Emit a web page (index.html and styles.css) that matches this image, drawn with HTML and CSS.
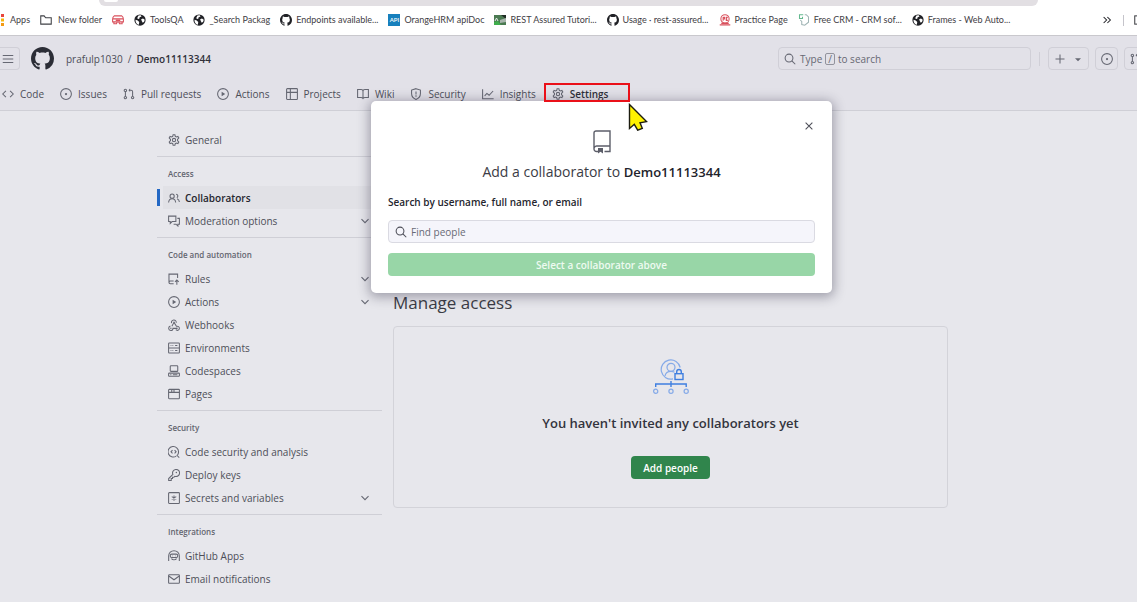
FILE: index.html
```html
<!DOCTYPE html>
<html lang="en">
<head>
<meta charset="utf-8">
<title>Collaborators · Demo11113344</title>
<link rel="stylesheet" href="styles.css">
</head>
<body>
<svg class="sprite" aria-hidden="true">
  <symbol id="mark" viewBox="0 0 16 16"><path class="solid" d="M8 0C3.58 0 0 3.58 0 8c0 3.54 2.29 6.53 5.47 7.59.4.07.55-.17.55-.38 0-.19-.01-.82-.01-1.49-2.01.37-2.53-.49-2.69-.94-.09-.23-.48-.94-.82-1.13-.28-.15-.68-.52-.01-.53.63-.01 1.08.58 1.23.82.72 1.21 1.87.87 2.33.66.07-.52.28-.87.51-1.07-1.78-.2-3.64-.89-3.64-3.95 0-.87.31-1.59.82-2.15-.08-.2-.36-1.02.08-2.12 0 0 .67-.21 2.2.82.64-.18 1.32-.27 2-.27s1.36.09 2 .27c1.53-1.04 2.2-.82 2.2-.82.44 1.1.16 1.92.08 2.12.51.56.82 1.27.82 2.15 0 3.07-1.87 3.75-3.65 3.95.29.25.54.73.54 1.48 0 1.07-.01 1.93-.01 2.2 0 .21.15.46.55.38A8.01 8.01 0 0016 8c0-4.42-3.58-8-8-8z"/></symbol>
  <symbol id="globe" viewBox="0 0 16 16"><circle class="solid" cx="8" cy="8" r="7.5"/><path fill="#fff" stroke="none" d="M2 7.5l3 1 2 2-.5 3.8C3.500 13.500 1.800 11 2 7.500zM6 2l3-.4 1 1.600-2.500 1-.5 2-2 .3L4.500 5zM9.500 7l2.500-1 2.300 1.500-.8 2.800-1.800 1.500-1.200-2.300z"/></symbol>
  <symbol id="code" viewBox="0 0 16 16"><path d="M5.200 3.700L1 8l4.200 4.300M10.800 3.700L15 8l-4.200 4.300"/></symbol>
  <symbol id="issue" viewBox="0 0 16 16"><circle cx="8" cy="8" r="7.200"/><circle class="solid" cx="8" cy="8" r="1.500"/></symbol>
  <symbol id="pull" viewBox="0 0 16 16"><circle cx="3.200" cy="3.200" r="1.600"/><circle cx="3.200" cy="12.800" r="1.600"/><circle cx="12.800" cy="12.800" r="1.600"/><path d="M3.200 5v6M12.800 11V5a2 2 0 0 0-2-2H8"/><path d="M9.500 .8L7.300 3l2.200 2.200z" class="solid"/></symbol>
  <symbol id="play" viewBox="0 0 16 16"><circle cx="8" cy="8" r="7.200"/><path class="solid" d="M6.200 5v6L11 8z"/></symbol>
  <symbol id="table" viewBox="0 0 16 16"><rect x=".8" y=".8" width="14.400" height="14.400" rx="1"/><path d="M1 5.800h14M5.800 1v14"/></symbol>
  <symbol id="book" viewBox="0 0 16 16"><path d="M.8 2h4.700A2.500 2.500 0 0 1 8 4.500 2.500 2.500 0 0 1 10.500 2h4.700v10.700h-4.500c-1.500 0-2.200.5-2.700 1.300-.5-.8-1.200-1.300-2.700-1.300H.8zM8 4.500V14"/></symbol>
  <symbol id="shield" viewBox="0 0 16 16"><path d="M8 .9l5.900 1.900v4.400c0 3.600-2 6.400-5.900 8-3.900-1.600-5.900-4.400-5.900-8V2.800zM8 4.500v4"/><circle class="solid" cx="8" cy="10.800" r="1"/></symbol>
  <symbol id="graph" viewBox="0 0 16 16"><path d="M.8 1.500v12.700h14.700M3.500 10.500l3-3.300 3 2.500 5.300-5.700"/></symbol>
  <symbol id="gear" viewBox="0 0 16 16"><path d="M6.800 .9h2.400l.5 2.200 1.300.75 2.200-.6 1.200 2.050-1.700 1.900v1.600l1.700 1.900-1.200 2.050-2.200-.6-1.300.75-.5 2.200H6.800l-.5-2.200-1.300-.75-2.200.6-1.200-2.050 1.700-1.900V7.200L1.600 5.300l1.200-2.050 2.200.6 1.300-.75z"/><circle cx="8" cy="8" r="2.200"/></symbol>
  <symbol id="people" viewBox="0 0 16 16"><circle cx="5.500" cy="5.500" r="2.800"/><path d="M.8 14c.3-3.500 2-5 4.700-5s4.400 1.500 4.700 5M10.800 3a2.500 2.500 0 0 1 1 4.700M12.200 9c1.800.8 2.800 2.200 3 4.300"/></symbol>
  <symbol id="comments" viewBox="0 0 16 16"><path d="M.8 1.500h9.700v7.200H5.500l-2.500 2.500V8.700H.8zM12.500 4.500h2.700v7.700h-2v2.500l-2.500-2.500H7.500"/></symbol>
  <symbol id="rules" viewBox="0 0 16 16"><path d="M7.500 14.200H3a1.700 1.700 0 0 1-1.700-1.700V1.500h11.500v5M1.500 12.500C1.500 11 2.500 10.700 3 10.700h4.500M11.800 15.500V9.500M9.300 11.800l2.500-2.500 2.500 2.500"/></symbol>
  <symbol id="hook" viewBox="0 0 16 16"><path d="M4.800 5.500A3.200 3.200 0 1 1 11 5M8 4.500L5.200 9.700M8 4.500l3.200 5.200c2.200-.5 4 1 4 2.700 0 2.800-3.200 3.500-4.800 1.900M3.200 9.300c-3.200 1.200-3 5.700.4 5.900 2 0 3-1.400 3-2.700H12"/><circle class="solid" cx="8" cy="4.300" r="1"/><circle class="solid" cx="3.800" cy="12.200" r="1"/><circle class="solid" cx="12" cy="12.400" r="1"/></symbol>
  <symbol id="server" viewBox="0 0 16 16"><rect x=".8" y="1.300" width="14.400" height="13.400" rx="1"/><path d="M1 8h14M3.500 4.700h1M6 4.700h1M9.500 4.700h3M3.500 11.300h1M6 11.300h1M9.500 11.300h3"/></symbol>
  <symbol id="laptop" viewBox="0 0 16 16"><rect x="3" y=".9" width="10" height="7.600" rx="1"/><rect x=".8" y="10.800" width="14.400" height="4.300" rx="1"/><path d="M3 13h1.500M6.500 13h6"/></symbol>
  <symbol id="browser" viewBox="0 0 16 16"><rect x=".8" y="1.800" width="14.400" height="12.400" rx="1"/><path d="M1 5.800h14M5 2v3.500M8 2v3.500"/></symbol>
  <symbol id="scan" viewBox="0 0 16 16"><path d="M11 13.500A7 7 0 1 1 14 8.500a6.500 6.500 0 0 1-1.300 3.500M11.500 12l3.500 3.500M6 5.500L4 7.700l2 2.200M8.800 5.500l2 2.200-2 2.200"/></symbol>
  <symbol id="key" viewBox="0 0 16 16"><path d="M6.500 7.300A4.700 4.700 0 1 1 9 9.700L7.800 11H6v1.700H4.300v2.500H.9v-2.500z"/><circle class="solid" cx="11.200" cy="4.800" r="1"/></symbol>
  <symbol id="asterisk" viewBox="0 0 16 16"><rect x=".8" y=".8" width="14.400" height="14.400" rx="1"/><path d="M8 4.500v7M5 6.200l6 3.600M11 6.200L5 9.800"/></symbol>
  <symbol id="bot" viewBox="0 0 16 16"><path d="M.9 14.500V8a7.100 7.100 0 0 1 14.200 0v6.500M4.500 11.500c2 2 5 2 7 0"/><rect x="3" y="5.500" width="10" height="4.500" rx="2"/><path d="M6 7.800h.5M9.500 7.800h.5"/></symbol>
  <symbol id="mail" viewBox="0 0 16 16"><rect x=".8" y="2.300" width="14.400" height="11.400" rx="1"/><path d="M1 4l7 5 7-5"/></symbol>
  <symbol id="chevron" viewBox="0 0 16 16"><path d="M3.300 5.500L8 10.200l4.700-4.700"/></symbol>
  <symbol id="search" viewBox="0 0 16 16"><circle cx="6.700" cy="6.700" r="5.200"/><path d="M10.500 10.500l4.500 4.500"/></symbol>
  <symbol id="plus" viewBox="0 0 16 16"><path d="M8 2v12M2 8h12"/></symbol>
  <symbol id="caret" viewBox="0 0 16 16"><path class="solid" d="M4 7h8L8 11z"/></symbol>
  <symbol id="close" viewBox="0 0 16 16"><path d="M3.500 3.500l9 9M12.500 3.500l-9 9"/></symbol>
  <symbol id="menu" viewBox="0 0 16 16"><path d="M1 3.300h14M1 8h14M1 12.700h14"/></symbol>
  <symbol id="folder" viewBox="0 0 16 16"><path d="M1 13.500v-11h4.500L7.500 5H15v8.500z"/></symbol>
</svg>

<header class="bookmarks">
  <div class="omnibox"><span class="omnibox-knob"></span></div>
  <nav class="bookmark-row" aria-label="Bookmarks">
    <a href="#" class="bookmark apps"><svg class="apps-dots" viewBox="0 0 4 12" aria-hidden="true"><path fill="#e8453c" d="M1 0h3v3H1z"/><path fill="#f6b60b" d="M1 4.500h3v3H1z"/><path fill="#f39b14" d="M1 9h3v3H1z"/></svg>Apps</a>
    <a href="#" class="bookmark folder"><svg class="icon"><use href="#folder"/></svg>New folder</a>
    <a href="#" class="bookmark" aria-label="Postman"><svg class="icon rose" viewBox="0 0 16 16"><path d="M3 2.500h10q2.200 1.500 2.200 4.500v3.500H.8V7Q.8 4 3 2.500zM1 6.500h14M2.500 10.500V13H6l1-2.500M9 10.500l1 2.500h3.500v-2.500M5 8.500h6"/></svg></a>
    <a href="#" class="bookmark"><svg class="icon dark"><use href="#globe"/></svg>ToolsQA</a>
    <a href="#" class="bookmark"><svg class="icon dark"><use href="#globe"/></svg>_Search Packag</a>
    <a href="#" class="bookmark"><svg class="icon dark"><use href="#mark"/></svg>Endpoints available...</a>
    <a href="#" class="bookmark"><span class="api">API</span>OrangeHRM apiDoc</a>
    <a href="#" class="bookmark"><svg class="icon" viewBox="0 0 12 12"><path fill="#4b7a52" stroke="none" d="M0 1h12v10H0z"/><path fill="#202c24" stroke="none" d="M0 1h7l5 4V1z"/><path fill="#a9b5ad" stroke="none" d="M6 6l6-2v4l-6 1z"/><path fill="#3fae4c" stroke="none" d="M0 8l4-1 3 4H0z"/><path stroke="#e6efe8" stroke-width="1" d="M1 7l1.500-3L4 7"/></svg>REST Assured Tutori...</a>
    <a href="#" class="bookmark"><svg class="icon dark"><use href="#mark"/></svg>Usage · rest-assured...</a>
    <a href="#" class="bookmark"><svg class="icon rose" viewBox="0 0 16 16"><circle cx="8" cy="6.500" r="5.500"/><path d="M5.500 4v5M5.500 4.500h2v2h-2M9 4.500h2l-1.500 2 1.500 2H9M1 14.500h14M3 12.500h10"/></svg>Practice Page</a>
    <a href="#" class="bookmark"><svg class="icon mint" viewBox="0 0 16 16"><path d="M7 1H2v5h4V3.500"/><path stroke="#9fb4b4" d="M3 8l2 2v4l4 1 5-4V4l-3-3H9"/></svg>Free CRM - CRM sof...</a>
    <a href="#" class="bookmark"><svg class="icon dark"><use href="#globe"/></svg>Frames - Web Auto...</a>
    <span class="overflow-tools">
      <button class="more" aria-label="More bookmarks"><svg class="icon" viewBox="0 0 16 16"><path d="M3.500 4L7.500 8l-4 4M8.500 4l4 4-4 4"/></svg></button>
      <span class="rule"></span>
      <svg class="icon" viewBox="0 0 16 16"><rect x="1" y="2.500" width="14" height="11"/></svg>
    </span>
  </nav>
</header>

<header class="site-header">
  <div class="top-row">
    <button class="menu-button" aria-label="Open menu"><svg class="icon"><use href="#menu"/></svg></button>
    <a href="#" class="logo" aria-label="Homepage"><svg><use href="#mark"/></svg></a>
    <nav class="crumbs" aria-label="Breadcrumb"><a href="#">prafulp1030</a><span>/</span><a href="#" class="current">Demo11113344</a></nav>
    <div class="tools">
      <button class="search-button"><svg class="icon"><use href="#search"/></svg><span>Type</span><kbd>/</kbd><span>to search</span></button>
      <span class="divider"></span>
      <button class="tool wide" aria-label="Create new"><svg class="icon"><use href="#plus"/></svg><svg class="icon"><use href="#caret"/></svg></button>
      <button class="tool" aria-label="Issues"><svg class="icon"><use href="#issue"/></svg></button>
      <button class="tool" aria-label="Pull requests"><svg class="icon"><use href="#pull"/></svg></button>
    </div>
  </div>
  <nav class="tabs" aria-label="Repository">
    <a href="#"><svg class="icon"><use href="#code"/></svg>Code</a>
    <a href="#"><svg class="icon"><use href="#issue"/></svg>Issues</a>
    <a href="#"><svg class="icon"><use href="#pull"/></svg>Pull requests</a>
    <a href="#"><svg class="icon"><use href="#play"/></svg>Actions</a>
    <a href="#"><svg class="icon"><use href="#table"/></svg>Projects</a>
    <a href="#"><svg class="icon"><use href="#book"/></svg>Wiki</a>
    <a href="#"><svg class="icon"><use href="#shield"/></svg>Security</a>
    <a href="#"><svg class="icon"><use href="#graph"/></svg>Insights</a>
    <a href="#" class="selected"><svg class="icon"><use href="#gear"/></svg>Settings</a>
  </nav>
</header>

<div class="page">
  <nav class="sidebar" aria-label="Settings">
    <a href="#" class="item"><svg class="icon"><use href="#gear"/></svg>General</a>
    <section>
      <h2>Access</h2>
      <a href="#" class="item active"><svg class="icon"><use href="#people"/></svg>Collaborators</a>
      <a href="#" class="item"><svg class="icon"><use href="#comments"/></svg>Moderation options<svg class="icon chevron"><use href="#chevron"/></svg></a>
    </section>
    <section>
      <h2>Code and automation</h2>
      <a href="#" class="item"><svg class="icon"><use href="#rules"/></svg>Rules<svg class="icon chevron"><use href="#chevron"/></svg></a>
      <a href="#" class="item"><svg class="icon"><use href="#play"/></svg>Actions<svg class="icon chevron"><use href="#chevron"/></svg></a>
      <a href="#" class="item"><svg class="icon"><use href="#hook"/></svg>Webhooks</a>
      <a href="#" class="item"><svg class="icon"><use href="#server"/></svg>Environments</a>
      <a href="#" class="item"><svg class="icon"><use href="#laptop"/></svg>Codespaces</a>
      <a href="#" class="item"><svg class="icon"><use href="#browser"/></svg>Pages</a>
    </section>
    <section>
      <h2>Security</h2>
      <a href="#" class="item"><svg class="icon"><use href="#scan"/></svg>Code security and analysis</a>
      <a href="#" class="item"><svg class="icon"><use href="#key"/></svg>Deploy keys</a>
      <a href="#" class="item"><svg class="icon"><use href="#asterisk"/></svg>Secrets and variables<svg class="icon chevron"><use href="#chevron"/></svg></a>
    </section>
    <section>
      <h2>Integrations</h2>
      <a href="#" class="item"><svg class="icon"><use href="#bot"/></svg>GitHub Apps</a>
      <a href="#" class="item"><svg class="icon"><use href="#mail"/></svg>Email notifications</a>
    </section>
  </nav>

  <main class="content">
    <h1>Manage access</h1>
    <div class="empty-state">
      <svg class="access-art" viewBox="0 0 36 36" aria-hidden="true">
        <g stroke="#85aae8" stroke-width="1.200"><path d="M20 19.900A9.600 9.600 0 1 1 27.200 8.500"/><circle cx="18" cy="8.300" r="4"/><path d="M12 17c.5-3 2.500-4.700 6-4.700 1.500 0 2.500.3 3.500 1"/><circle cx="2.700" cy="32.300" r="2.100"/><circle cx="18" cy="32.300" r="2.100"/><circle cx="33.200" cy="32.300" r="2.100"/></g>
        <g stroke="#3f7fe0" stroke-width="1.400"><rect x="22" y="14.700" width="8" height="5.800"/><path d="M23.700 14.500v-1.700a2.300 2.300 0 0 1 4.600 0v1.700M2.700 28v-3h30.500v3M18 22v6"/></g>
      </svg>
      <h2>You haven't invited any collaborators yet</h2>
      <button class="primary">Add people</button>
    </div>
  </main>
</div>

<div class="dialog" role="dialog" aria-labelledby="dialog-title">
  <button class="close" aria-label="Close"><svg class="icon"><use href="#close"/></svg></button>
  <svg class="repo" viewBox="0 0 18 24" aria-hidden="true"><path d="M5 21.500H3.500a2.500 2.500 0 0 1-2.500-2.500V3a2 2 0 0 1 2-2h14v20.500h-5.500M1.200 18c.4-1.500 1.300-2 2.300-2H17"/><path class="solid" d="M5 18h5v5.500l-2.500-1.800L5 23.500z"/></svg>
  <h2 id="dialog-title">Add a collaborator to <strong>Demo11113344</strong></h2>
  <label for="people-search">Search by username, full name, or email</label>
  <div class="field"><svg class="icon"><use href="#search"/></svg><input id="people-search" type="text" placeholder="Find people"></div>
  <button class="primary submit" disabled>Select a collaborator above</button>
</div>

<div class="highlight"></div>
<svg class="pointer" viewBox="0 0 20 28" aria-hidden="true"><path d="M1.500 1.500v24l4.800-4.200 3.400 5.900 4.600-1.900-2.300-5.600 6.500-1.100z"/></svg>
</body>
</html>
```

FILE: styles.css
```css
* { box-sizing: border-box; }

body {
  margin: 0;
  min-height: 100vh;
  position: relative;
  overflow: hidden;
  background: #e7e7ec;
  color: #4d4e58;
  font: 10px/16px "Open Sans", "Noto Sans", sans-serif;
}

a { color: inherit; text-decoration: none; }
button, input { font: inherit; color: inherit; }
button { padding: 0; border: 0; background: none; }
h1, h2 { margin: 0; }

.sprite { position: absolute; width: 0; height: 0; }
.icon {
  flex: none;
  width: 12px;
  height: 12px;
}
svg {
  fill: none;
  stroke: currentColor;
  stroke-width: 1.4;
}
.solid { fill: currentColor; stroke: none; }

/* Browser bookmarks */
.bookmarks {
  height: 36px;
  border-bottom: 1px solid #c9c8cd;
  background: #fff;
  color: #3f4045;
}
.omnibox {
  height: 6px;
  margin: 0 99px;
  overflow: hidden;
  border-radius: 0 0 12px 12px;
  background: #e2dfe3;
}
.omnibox-knob {
  display: block;
  width: 14px;
  height: 2px;
  margin-left: 5px;
  border-radius: 0 0 8px 8px;
  background: #fff;
}
.bookmark-row {
  display: flex;
  align-items: center;
  gap: 10px;
  height: 28px;
  font-family: Lato, "Open Sans", sans-serif;
  font-size: 9px;
  white-space: nowrap;
}
.bookmark { display: flex; align-items: center; gap: 4px; }
.apps-dots { width: 4px; height: 12px; stroke: none; }
.apps, .folder { gap: 6px; }
.dark { color: #202126; }
.rose { color: #d9505c; }
.mint { color: #63b98e; }
.api {
  width: 12px;
  background: #1780bd;
  color: #fff;
  font-size: 6px;
  font-weight: 600;
  line-height: 12px;
  text-align: center;
}
.overflow-tools {
  display: flex;
  align-items: center;
  gap: 10px;
  margin: 0 -9px 0 auto;
}
.more { display: flex; color: #202126; }
.rule { width: 1px; height: 11px; background: #c5c4cb; }

/* Repository header */
.site-header {
  border-bottom: 1px solid #cfcfd6;
  background: #e2e1e8;
}
.top-row {
  display: flex;
  align-items: center;
  padding-top: 11px;
}
.menu-button {
  display: flex;
  align-items: center;
  width: 20px;
  height: 23px;
  padding-left: 2px;
  border: 1px solid #d0cfd7;
  border-left: 0;
  border-radius: 0 4px 4px 0;
  color: #666873;
}
.logo { display: flex; margin: 0 12px 0 11px; color: #2b2d36; }
.logo svg { width: 23px; height: 23px; }
.crumbs { display: flex; gap: 5px; }
.current, .selected { color: #2f3039; font-weight: 600; }
.tools {
  display: flex;
  align-items: center;
  gap: 6px;
  margin: 0 -10px 0 auto;
  color: #666873;
}
.search-button {
  display: flex;
  align-items: center;
  gap: 3px;
  width: 253px;
  height: 23px;
  padding: 0 5px;
  border: 1px solid #d0cfd7;
  border-radius: 4px;
}
.search-button .icon { margin-right: 1px; }
kbd {
  padding: 0 2px;
  border: 1px solid #92939d;
  border-radius: 2px;
  font: inherit;
  line-height: 10px;
}
.divider { width: 1px; height: 14px; margin: 0 2px; background: #d0cfd7; }
.tool {
  display: flex;
  align-items: center;
  justify-content: center;
  gap: 6px;
  width: 23px;
  height: 23px;
  border: 1px solid #d0cfd7;
  border-radius: 4px;
}
.tool.wide { width: 41px; }
.tabs {
  display: flex;
  gap: 16px;
  padding: 16px 2px 8px;
  white-space: nowrap;
}
.tabs a { display: flex; align-items: center; gap: 6px; }
.tabs .icon, .sidebar .icon { color: #656772; }

/* Settings page */
.page {
  display: flex;
  gap: 11px;
  padding: 17px 189px 12px 157px;
}
.sidebar { flex: none; width: 225px; }
.sidebar section {
  margin-top: 5px;
  border-top: 1px solid #cfcfd6;
}
.sidebar h2 {
  padding: 10px 11px 6px;
  color: #63656f;
  font-size: 8px;
  font-weight: 600;
  line-height: 13px;
}
.item {
  display: flex;
  align-items: center;
  gap: 5px;
  height: 23px;
  padding: 0 11px;
}
.sidebar .chevron { margin-left: auto; }
.active {
  background: linear-gradient(#2468c4, #2468c4) 0 50% / 3px 17px no-repeat,
    linear-gradient(#e1e1e6, #e1e1e6) 6px 0 no-repeat;
  color: #25262e;
  font-weight: 600;
}
.content { flex: 1; min-width: 0; padding-top: 163px; }
.content h1 {
  color: #3b3c45;
  font-size: 17px;
  font-weight: 400;
  line-height: 24px;
}
.empty-state {
  display: flex;
  flex-direction: column;
  align-items: center;
  margin-top: 11px;
  padding: 32px 16px 28px;
  border: 1px solid #d3d3d9;
  border-radius: 4px;
}
.access-art { width: 36px; height: 36px; }
.empty-state h2 {
  margin: 17px 0 22px;
  color: #33343d;
  font-size: 13px;
  font-weight: 600;
  line-height: 22px;
}
.primary {
  height: 23px;
  padding: 0 12px;
  border-radius: 4px;
  background: #30854c;
  color: #fff;
  font-weight: 600;
}

/* Add collaborator dialog */
.dialog {
  position: absolute;
  top: 101px;
  left: 371px;
  display: flex;
  flex-direction: column;
  width: 461px;
  padding: 29px 17px 17px;
  border-radius: 5px;
  background: #fff;
  box-shadow: 0 2px 12px 2px rgba(40, 38, 60, .38);
}
.close { position: absolute; top: 19px; right: 17px; display: flex; }
.repo { align-self: center; width: 18px; height: 24px; color: #5c5e69; }
.dialog h2 {
  margin-top: 7px;
  color: #3b3c45;
  font-size: 14px;
  font-weight: 400;
  line-height: 22px;
  text-align: center;
}
.dialog strong { color: #22232b; font-size: 13px; font-weight: 600; }
.dialog label {
  margin: 11px 0 10px;
  color: #25262e;
  font-weight: 600;
}
.field {
  display: flex;
  align-items: center;
  gap: 4px;
  height: 23px;
  padding: 0 6px;
  border: 1px solid #dadae2;
  border-radius: 4px;
  background: #f5f5fb;
}
.field input {
  flex: 1;
  min-width: 0;
  padding: 0;
  border: 0;
  outline: 0;
  background: none;
}
.field input::placeholder { color: #686a76; opacity: 1; }
.submit { margin-top: 10px; background: #98d6a7; color: #eefaf1; }

/* Tutorial annotations */
.highlight {
  position: absolute;
  top: 83px;
  left: 544px;
  width: 86px;
  height: 19px;
  border: 2px solid #ea1019;
}
.pointer {
  position: absolute;
  top: 103px;
  left: 628px;
  width: 20px;
  height: 28px;
  fill: #fff200;
  stroke: #1c1c10;
}
```
